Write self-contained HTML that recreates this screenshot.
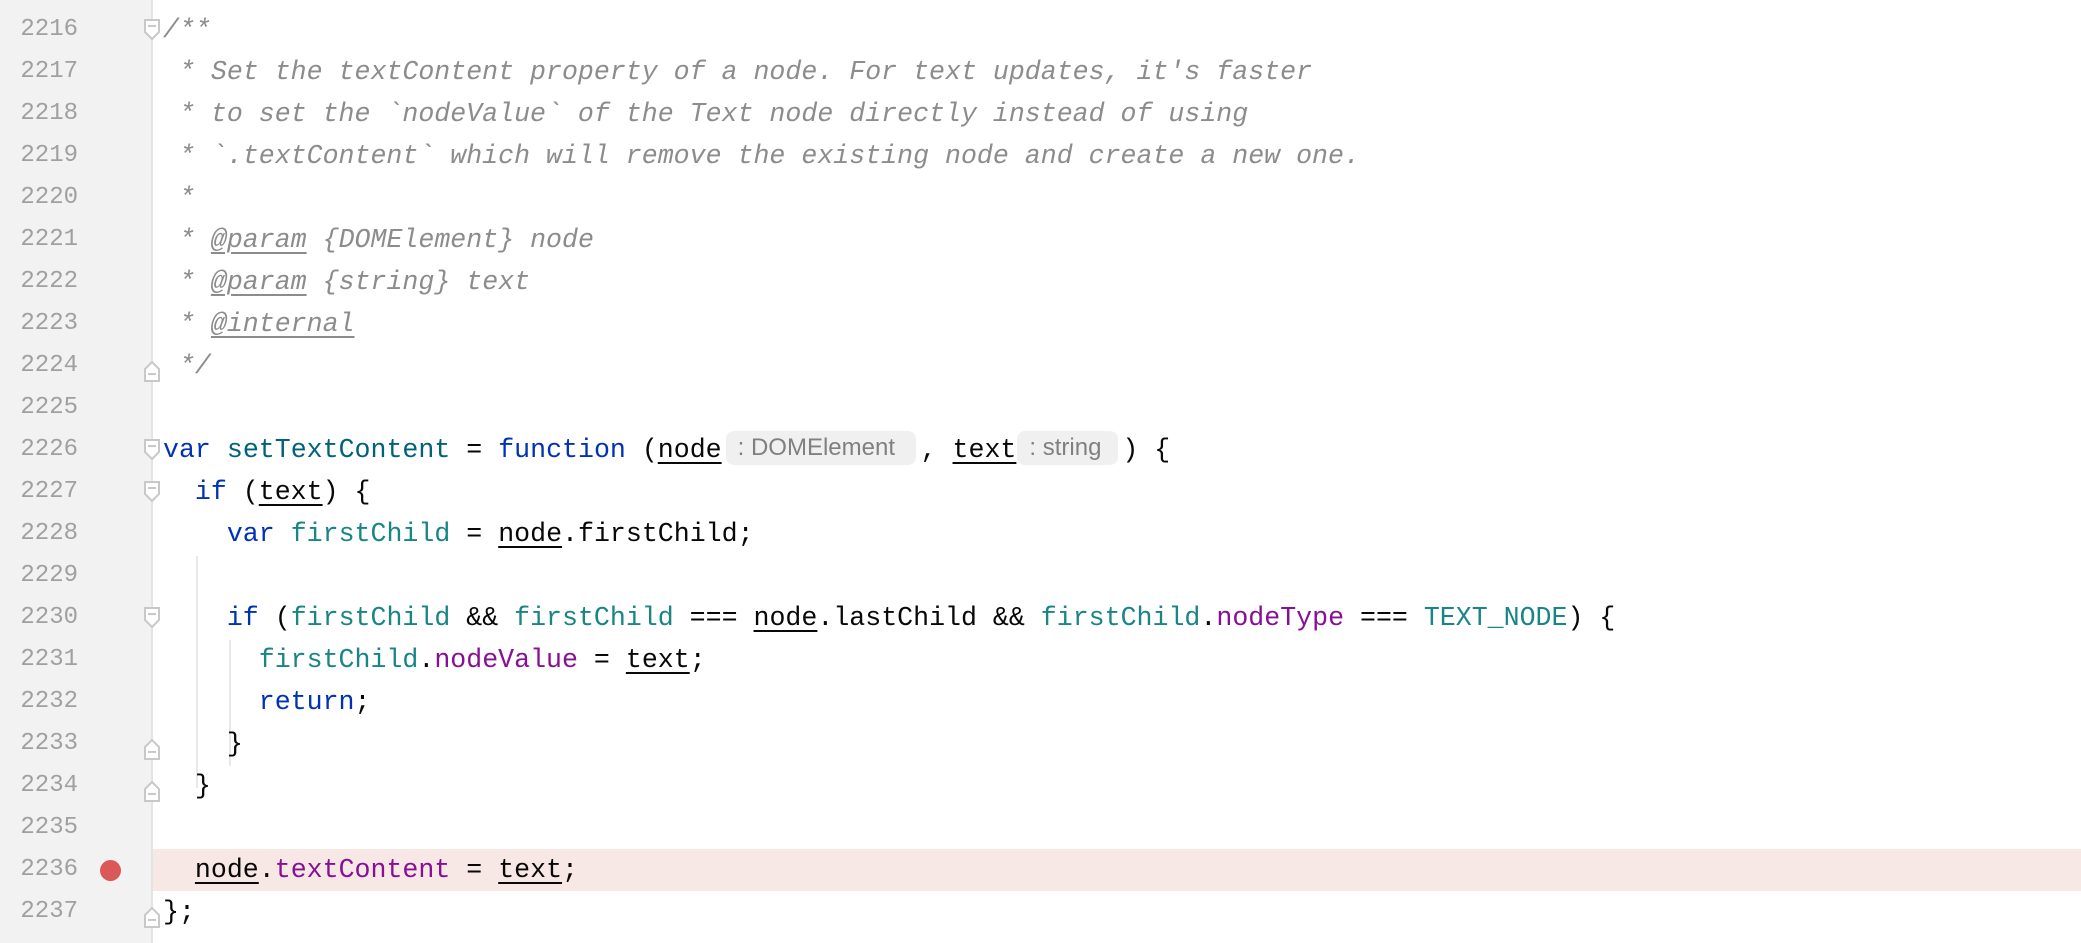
<!DOCTYPE html>
<html><head><meta charset="utf-8"><style>
html,body{margin:0;padding:0;background:#fff;width:2081px;height:943px;overflow:hidden}
.g{position:absolute;left:0;top:0;width:151px;height:943px;background:#f2f2f2}
.sep{position:absolute;left:151px;top:0;width:2px;height:943px;background:#e4e4e4}
.ln{position:absolute;left:0;width:78px;text-align:right;font:24px/42px "Liberation Mono",monospace;color:#a0a0a0}
.code{position:absolute;left:163px;font:26.6px/42px "Liberation Mono",monospace;color:#080808;white-space:pre}
.c{color:#8c8c8c;font-style:italic}
.u{text-decoration:underline;text-underline-offset:5px;text-decoration-thickness:2px}
.k{color:#0033b3}.f{color:#00627a}.v{color:#1a8585}.p{color:#871094}
.h{display:inline-block;font:24px/34px "Liberation Sans",sans-serif;color:#808080;background:#f0f0f0;border-radius:8px;vertical-align:middle;text-align:left;padding-left:12px;box-sizing:border-box;font-style:normal;position:relative;top:-2px}
.hl{position:absolute;left:153px;top:849px;width:1928px;height:42px;background:#f8e8e5}
.bp{position:absolute;left:100px;top:860px;width:21px;height:21px;border-radius:50%;background:#db5858}
.ig{position:absolute;width:2px;background:#e8e8e8}
</style></head><body>
<div class="g"></div><div class="sep"></div><div class="hl"></div><div class="bp"></div>
<div class="ig" style="left:196px;top:556px;height:232px"></div>
<div class="ig" style="left:229px;top:640px;height:126px"></div>
<div id="lines"></div>
<svg width="2081" height="943" style="position:absolute;left:0;top:0">
<g fill="#fff" stroke="#c8c8c8" stroke-width="2">
<path d="M145 20h14v12l-7 7l-7-7z"/><path d="M148 26h8"/>
<path d="M145 440h14v12l-7 7l-7-7z"/><path d="M148 446h8"/>
<path d="M145 482h14v12l-7 7l-7-7z"/><path d="M148 488h8"/>
<path d="M145 608h14v12l-7 7l-7-7z"/><path d="M148 614h8"/>
<path d="M145 381v-12l7-7l7 7v12z"/><path d="M148 374h8"/>
<path d="M145 759v-12l7-7l7 7v12z"/><path d="M148 752h8"/>
<path d="M145 801v-12l7-7l7 7v12z"/><path d="M148 794h8"/>
<path d="M145 927v-12l7-7l7 7v12z"/><path d="M148 920h8"/>
</g></svg>
<script>
var L=[
'<span class="c">/**</span>',
'<span class="c"> * Set the textContent property of a node. For text updates, it\'s faster</span>',
'<span class="c"> * to set the `nodeValue` of the Text node directly instead of using</span>',
'<span class="c"> * `.textContent` which will remove the existing node and create a new one.</span>',
'<span class="c"> *</span>',
'<span class="c"> * <span class="u">@param</span> {DOMElement} node</span>',
'<span class="c"> * <span class="u">@param</span> {string} text</span>',
'<span class="c"> * <span class="u">@internal</span></span>',
'<span class="c"> */</span>',
'',
'<span class="k">var</span> <span class="f">setTextContent</span> = <span class="k">function</span> (<span class="u">node</span><span class="h" style="width:190px;margin:0 5px 0 4px">: DOMElement</span>, <span class="u">text</span><span class="h" style="width:101px;margin:0 4px 0 1px">: string</span>) {',
'  <span class="k">if</span> (<span class="u">text</span>) {',
'    <span class="k">var</span> <span class="v">firstChild</span> = <span class="u">node</span>.firstChild;',
'',
'    <span class="k">if</span> (<span class="v">firstChild</span> &amp;&amp; <span class="v">firstChild</span> === <span class="u">node</span>.lastChild &amp;&amp; <span class="v">firstChild</span>.<span class="p">nodeType</span> === <span class="v">TEXT_NODE</span>) {',
'      <span class="v">firstChild</span>.<span class="p">nodeValue</span> = <span class="u">text</span>;',
'      <span class="k">return</span>;',
'    }',
'  }',
'',
'  <span class="u">node</span>.<span class="p">textContent</span> = <span class="u">text</span>;',
'};'];
var h='';
for(var i=0;i<L.length;i++){var t=9+i*42;
h+='<div class="ln" style="top:'+t+'px">'+(2216+i)+'</div><div class="code" style="top:'+t+'px">'+L[i]+'</div>';}
document.getElementById('lines').innerHTML=h;
</script>
</body></html>
